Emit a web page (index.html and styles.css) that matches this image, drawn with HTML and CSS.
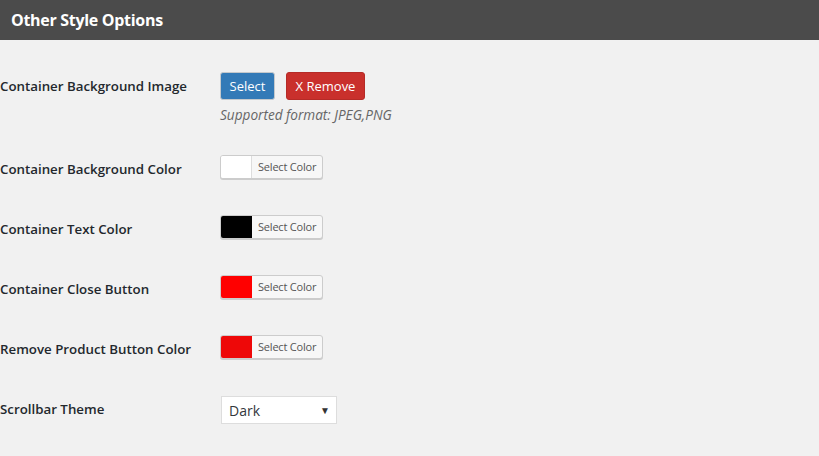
FILE: index.html
```html
<!DOCTYPE html>
<html>
<head>
<meta charset="utf-8">
<link rel="stylesheet" href="styles.css">
</head>
<body>
<div class="header"><h2 class="title">Other Style Options</h2></div>
<div class="form">
  <div class="row row-image">
    <div class="label">Container Background Image</div>
    <div class="field">
      <div class="btns">
        <button class="btn btn-select">Select</button>
        <button class="btn btn-remove">X Remove</button>
      </div>
      <p class="hint">Supported format: JPEG,PNG</p>
    </div>
  </div>
  <div class="row row-color">
    <div class="label">Container Background Color</div>
    <div class="field">
      <div class="picker"><span class="swatch sw-white"></span><span class="picker-text">Select Color</span></div>
    </div>
  </div>
  <div class="row row-color">
    <div class="label">Container Text Color</div>
    <div class="field">
      <div class="picker"><span class="swatch sw-black"></span><span class="picker-text">Select Color</span></div>
    </div>
  </div>
  <div class="row row-color">
    <div class="label">Container Close Button</div>
    <div class="field">
      <div class="picker"><span class="swatch sw-red"></span><span class="picker-text">Select Color</span></div>
    </div>
  </div>
  <div class="row row-color">
    <div class="label">Remove Product Button Color</div>
    <div class="field">
      <div class="picker"><span class="swatch sw-red2"></span><span class="picker-text">Select Color</span></div>
    </div>
  </div>
  <div class="row row-select">
    <div class="label">Scrollbar Theme</div>
    <div class="field">
      <div class="dropdown"><span>Dark</span><span class="caret">&#9660;</span></div>
    </div>
  </div>
</div>
</body>
</html>
```
FILE: styles.css
```css
html, body {
  margin: 0;
  padding: 0;
  background: #f1f1f1;
  font-family: "Open Sans", "Noto Sans", sans-serif;
  color: #23282d;
}
.header {
  background: #4b4b4b;
  height: 40px;
  display: flex;
  align-items: center;
  padding-left: 11px;
}
.title {
  margin: 0;
  color: #fff;
  font-size: 16px;
  font-weight: 700;
  letter-spacing: -0.3px;
}
.form {
  padding-top: 32px;
}
.row {
  display: flex;
  align-items: flex-start;
}
.label {
  width: 220px;
  flex: none;
  font-size: 13.3px;
  font-weight: 600;
  line-height: 28px;
}
.row-color {
  height: 24px;
  margin-top: 36px;
}
.row-color .label {
  line-height: 24px;
  position: relative;
  top: 2px;
}
.row-color:nth-child(2) { margin-top: 31px; }
.row-select { margin-top: 37px; }
.row-select .label {
  position: relative;
  top: -1px;
}
.btns {
  display: flex;
  gap: 11px;
}
.btn {
  height: 28px;
  border-radius: 3px;
  font-family: inherit;
  font-size: 13px;
  color: #fff;
  padding: 0;
  cursor: pointer;
}
.btn-select {
  width: 55px;
  background: #337ab7;
  border: 1px solid #c5c9cc;
}
.btn-remove {
  width: 79px;
  background: #c9302c;
  border: 1px solid #b52b27;
}
.hint {
  margin: 5px 0 0;
  font-size: 13.6px;
  font-style: italic;
  color: #666;
  line-height: 19px;
}
.picker {
  display: flex;
  width: 103px;
  height: 24px;
  box-sizing: border-box;
  border: 1px solid #ccc;
  border-radius: 3px;
  background: #f7f7f7;
  box-shadow: 0 1px 0 #ccc;
  overflow: hidden;
}
.swatch {
  width: 30px;
  flex: none;
  border-right: 1px solid #ddd;
}
.sw-white { background: #fff; }
.sw-black { background: #000; border-right-color: #000; }
.sw-red { background: #ff0000; border-right-color: #f00; }
.sw-red2 { background: #ee0808; border-right-color: #ee0808; }
.picker-text {
  font-size: 11px;
  color: #555;
  line-height: 22px;
  padding-left: 6px;
  letter-spacing: -0.2px;
}
.dropdown {
  margin-left: 1px;
  width: 116px;
  height: 28px;
  box-sizing: border-box;
  border: 1px solid #ddd;
  background: #fff;
  display: flex;
  align-items: center;
  justify-content: space-between;
  padding: 0 6px 0 7px;
  font-size: 14px;
  color: #32373c;
}
.caret {
  font-size: 10px;
  color: #333;
}
```
